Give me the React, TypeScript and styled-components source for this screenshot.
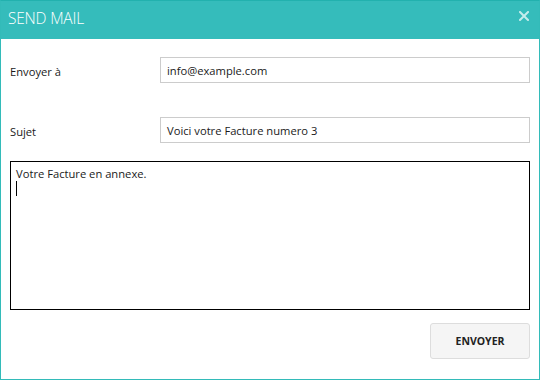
import React from 'react';
import styled, { createGlobalStyle } from 'styled-components';

const GlobalStyle = createGlobalStyle`
	html, body {
		margin: 0;
		padding: 0;
		background: #ffffff;
	}
	* {
		box-sizing: border-box;
	}
`;

const Window = styled.div`
	width: 540px;
	height: 380px;
	display: flex;
	flex-flow: column;
	border: 1px solid #33bbb9;
	border-top-color: #22b1ae;
	background: #ffffff;
	font-family: "Segoe UI", "Open Sans", "Noto Sans", sans-serif;
	font-size: 11px;
	color: #1a1a1a;
`;

const TitleBar = styled.div`
	height: 38px;
	flex: none;
	display: flex;
	align-items: center;
	justify-content: space-between;
	padding: 0 10px 0 7px;
	background: #35bcbb;
	color: #ffffff;
`;

const Title = styled.div`
	font-size: 15.5px;
	font-weight: 300;
	letter-spacing: -0.2px;
	margin-top: -4px;
`;

const CloseButton = styled.div`
	width: 10px;
	height: 10px;
	display: flex;
	margin-top: -8px;
	cursor: pointer;
`;

const Content = styled.div`
	flex: 1;
	display: flex;
	flex-flow: column;
	padding: 18px 9px 0 9px;
`;

const FieldRow = styled.div<{ $gap: number }>`
	display: grid;
	grid-template-columns: 150px 1fr;
	align-items: center;
	margin-bottom: ${p => p.$gap}px;
`;

const Label = styled.label`
	font-size: 11.2px;
	color: #1a1a1a;
	margin-top: 2px;
`;

const Input = styled.div`
	height: 26px;
	display: flex;
	align-items: center;
	padding: 0 6px;
	border: 1px solid #cccccc;
	background: #ffffff;
	font-size: 11.2px;
	color: #1a1a1a;
`;

const Body = styled.div`
	height: 149px;
	border: 1px solid #000000;
	padding: 4px 5px;
	font-size: 11.2px;
	line-height: 15px;
	color: #1a1a1a;
`;

const Caret = styled.div`
	width: 1px;
	height: 15px;
	background: #000000;
`;

const Footer = styled.div`
	display: flex;
	justify-content: flex-end;
	padding-top: 13px;
`;

const SendButton = styled.button`
	width: 100px;
	height: 36px;
	border: 1px solid #dddddd;
	border-radius: 3px;
	background: #f5f5f5;
	font-family: "Segoe UI", "Open Sans", "Noto Sans", sans-serif;
	font-size: 10.5px;
	font-weight: 700;
	color: #222222;
	cursor: pointer;
`;

export default function App() {
	return (
		<>
			<GlobalStyle />
			<Window>
				<TitleBar>
					<Title>SEND MAIL</Title>
					<CloseButton>
						<svg width="10" height="10" viewBox="0 0 10 10">
							<path d="M1 1 L9 9 M9 1 L1 9" stroke="#c4ecec" strokeWidth="2" strokeLinecap="square" />
						</svg>
					</CloseButton>
				</TitleBar>

				<Content>
					<FieldRow $gap={34}>
						<Label>Envoyer à</Label>
						<Input>info@example.com</Input>
					</FieldRow>

					<FieldRow $gap={18}>
						<Label>Sujet</Label>
						<Input>Voici votre Facture numero 3</Input>
					</FieldRow>

					<Body>
						Votre Facture en annexe.
						<Caret />
					</Body>

					<Footer>
						<SendButton>ENVOYER</SendButton>
					</Footer>
				</Content>
			</Window>
		</>
	);
}
